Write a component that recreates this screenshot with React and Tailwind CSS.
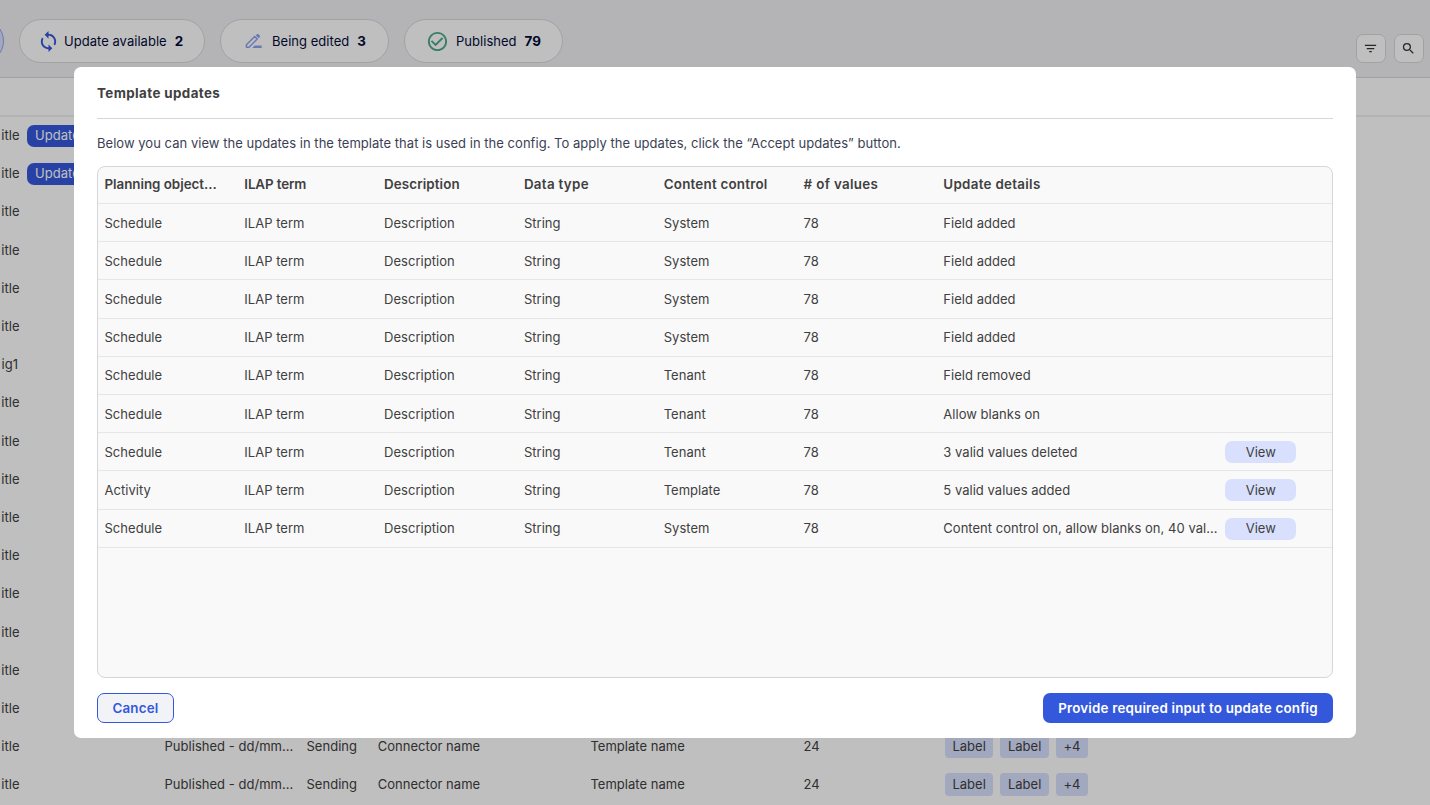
import { MdCheckCircleOutline, MdFilterList, MdSearch, MdSync } from "react-icons/md"

const columns = [
  { label: "Planning object…", spacing: "tracking-[-0.03px]" },
  { label: "ILAP term", spacing: "tracking-[-0.1px]" },
  { label: "Description", spacing: "tracking-[0.1px]" },
  { label: "Data type", spacing: "tracking-[0.3px]" },
  { label: "Content control", spacing: "tracking-[0.23px]" },
  { label: "# of values", spacing: "tracking-[0.35px]" },
  { label: "Update details", spacing: "tracking-[0.3px]" }
]

const updates = [
  { object: "Schedule", control: "System", details: "Field added" },
  { object: "Schedule", control: "System", details: "Field added" },
  { object: "Schedule", control: "System", details: "Field added" },
  { object: "Schedule", control: "System", details: "Field added" },
  { object: "Schedule", control: "Tenant", details: "Field removed" },
  { object: "Schedule", control: "Tenant", details: "Allow blanks on" },
  { object: "Schedule", control: "Tenant", details: "3 valid values deleted", view: true },
  { object: "Activity", control: "Template", details: "5 valid values added", view: true },
  { object: "Schedule", control: "System", details: "Content control on, allow blanks on, 40 val…", view: true }
]

const configs = Array.from({ length: 18 }, (_, i) => ({
  title: i === 6 ? "ig1" : "itle",
  hasUpdate: i < 2,
  full: i > 15
}))

function EditIcon({ className }) {
  return (
    <svg viewBox="0 0 18 16" className={className} fill="none">
      <path d="M1.4 14.2v-2.5l8.3-8.2 2.5 2.5-8.2 8.2z" stroke="currentColor" strokeWidth="1.5" strokeLinejoin="round" />
      <path d="M10.8 2.4 12 1.2a1 1 0 0 1 1.4 0l1.4 1.4a1 1 0 0 1 0 1.4l-1.2 1.2z" fill="currentColor" />
      <path d="M7.2 15l2.5-2.5h7V15z" fill="currentColor" />
    </svg>
  )
}

function StatusPill({ icon, label, count, className }) {
  return (
    <div className={`flex h-11 shrink-0 items-center rounded-full border border-[#d9d9dc] bg-white text-[#030b3a] ${className}`}>
      {icon}
      <span>{label}</span>
      <span className="ml-2 text-[13.36px] font-bold">{count}</span>
    </div>
  )
}

function IconButton({ children }) {
  return (
    <button className="flex h-[29px] w-[30px] items-center justify-center rounded-[7px] border border-[#d9d9dc] bg-white text-[#333]">
      {children}
    </button>
  )
}

function Tag({ children }) {
  return <span className="flex h-[23px] items-center rounded-[4px] bg-[#d9e0fe] px-[7.5px]">{children}</span>
}

function ConfigRow({ title, hasUpdate, full }) {
  return (
    <div className="flex h-[38.2px] shrink-0 items-center whitespace-nowrap">
      <div className={`flex shrink-0 justify-end ${title === "itle" ? "w-[19.5px]" : "w-[18px]"}`}>{title}</div>
      {hasUpdate && (
        <span className="ml-[7.5px] flex h-[22px] w-[100px] items-center rounded-[7px] bg-[#3458db] px-2 text-white">Update</span>
      )}
      {full && (
        <>
          <div className="ml-[145px] w-[142px] shrink-0">Published - dd/mm…</div>
          <div className="w-[71.2px] shrink-0">Sending</div>
          <div className="w-[212.7px] shrink-0">Connector name</div>
          <div className="w-[213px] shrink-0">Template name</div>
          <div className="w-[141.5px] shrink-0">24</div>
          <div className="flex gap-[7px]">
            <Tag>Label</Tag>
            <Tag>Label</Tag>
            <Tag>+4</Tag>
          </div>
        </>
      )}
    </div>
  )
}

function UpdatesTable() {
  return (
    <div className="mt-[13px] h-[512px] overflow-hidden rounded-[8px] border border-[#d6d6d6] bg-[#f9f9f9]">
      <div className="grid h-[37px] grid-cols-[repeat(6,139.8px)_1fr] items-center border-b border-[#e6e6e6] px-[6.5px] pb-[2px] text-[13.36px] font-semibold">
        {columns.map((c) => (
          <div key={c.label} className={`whitespace-nowrap ${c.spacing}`}>{c.label}</div>
        ))}
      </div>
      {updates.map((u, i) => (
        <div key={i} className="grid h-[38.2px] grid-cols-[repeat(6,139.8px)_1fr] items-center border-b border-[#e6e6e6] px-[6.5px] pt-[1px]">
          <div>{u.object}</div>
          <div>ILAP term</div>
          <div>Description</div>
          <div>String</div>
          <div>{u.control}</div>
          <div>78</div>
          <div className="flex items-center">
            <span className="w-[282px] whitespace-nowrap">{u.details}</span>
            {u.view && (
              <button className="h-[22px] w-[71px] rounded-[7px] bg-[#d9e0fe]">View</button>
            )}
          </div>
        </div>
      ))}
    </div>
  )
}

function UpdatesDialog() {
  return (
    <div className="absolute top-[67px] left-[74px] flex h-[671px] w-[1282px] flex-col rounded-[7px] bg-white px-[23px]">
      <h2 className="flex h-[52px] shrink-0 items-center border-b border-[#d6d6d6] pt-px text-[13.36px] font-bold tracking-[0.4px]">Template updates</h2>
      <p className="mt-[14px] h-[20px] shrink-0 leading-[20px] text-[#3c3f54]">
        Below you can view the updates in the template that is used in the config. To apply the updates, click the “Accept updates” button.
      </p>
      <UpdatesTable />
      <div className="mt-[15px] flex justify-between text-[13.36px] font-semibold tracking-[0.2px]">
        <button className="h-[30px] w-[77px] rounded-[7px] border border-[#3458db] bg-[#f2f3f7] text-[#3458db]">Cancel</button>
        <button className="h-[30px] w-[290px] rounded-[7px] bg-[#3458db] text-white">Provide required input to update config</button>
      </div>
    </div>
  )
}

export default function App() {
  return (
    <div className="relative h-[805px] w-[1430px] overflow-hidden bg-white font-['Inter',sans-serif] text-[13px] leading-[19px] tracking-[0.03px] text-[#404040]">
      <header className="flex h-[78px] items-start border-b border-[#d6d6d8] bg-[#f0f1f4] pt-[19px]">
        <div className="-ml-24 h-11 w-[100px] shrink-0 rounded-full border border-[#8ea2f0] bg-[#d9e0fe]" />
        <StatusPill className="ml-[15px] w-[186px] pl-[17px]" icon={<MdSync className="mr-[4px] size-[23px] text-[#3458db]" />} label="Update available" count="2" />
        <StatusPill className="ml-[15px] w-[169px] pl-[23.5px]" icon={<EditIcon className="mr-[9.5px] h-4 w-[18px] text-[#8ea2f0]" />} label="Being edited" count="3" />
        <StatusPill className="ml-[15px] w-[159px] pl-[21px]" icon={<MdCheckCircleOutline className="mr-[7px] size-[23px] text-[#4da88c]" />} label="Published" count="79" />
        <div className="mt-[15px] mr-[6.5px] ml-auto flex gap-2">
          <IconButton><MdFilterList className="size-[15px]" /></IconButton>
          <IconButton><MdSearch className="size-[15px]" /></IconButton>
        </div>
      </header>
      <div className="h-[38.5px] border-b-2 border-[#efefef]" />
      <div className="flex flex-col">
        {configs.map((c, i) => (
          <ConfigRow key={i} {...c} />
        ))}
      </div>
      <div className="absolute inset-0 bg-black/25" />
      <UpdatesDialog />
    </div>
  )
}
